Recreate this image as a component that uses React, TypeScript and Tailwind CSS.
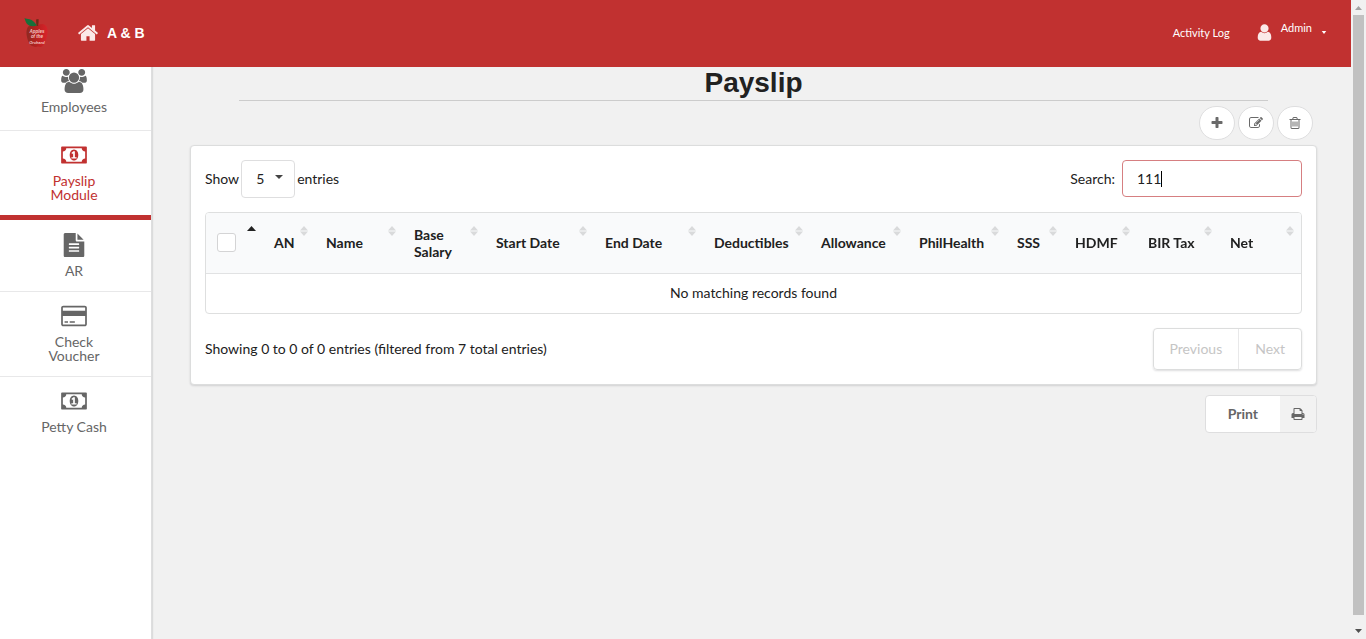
import { useEffect, useRef, useState } from "react";

const paths = {
  home: "M1472 992v480q0 26-19 45t-45 19h-384v-384h-256v384h-384q-26 0-45-19t-19-45v-480q0-1 .5-3t.5-3l575-474 575 474q1 2 1 6zm223-69l-62 74q-8 9-21 11h-3q-13 0-21-7l-692-577-692 577q-12 8-24 7-13-2-21-11l-62-74q-8-10-7-23.5t11-21.5l719-599q32-26 76-26t76 26l244 204v-195q0-14 9-23t23-9h192q14 0 23 9t9 23v408l219 182q10 8 11 21.5t-7 23.5z",
  user: "M1536 1399q0 109-62.5 187t-150.5 78h-854q-88 0-150.5-78t-62.5-187q0-85 8.5-160.5t31.5-152 58.5-131 94-89 134.5-34.5q131 128 313 128t313-128q76 0 134.5 34.5t94 89 58.5 131 31.5 152 8.5 160.5zm-256-887q0 159-112.5 271.5t-271.5 112.5-271.5-112.5-112.5-271.5 112.5-271.5 271.5-112.5 271.5 112.5 112.5 271.5z",
  users: "M593 896q-162 5-265 128h-134q-82 0-138-40.5t-56-118.5q0-353 124-353 6 0 43.5 21t97.5 42.5 119 21.5q67 0 133-23-5 37-5 66 0 139 81 256zm1071 637q0 120-73 189.5t-194 69.5h-874q-121 0-194-69.5t-73-189.5q0-53 3.5-103.5t14-109 26.5-108.5 43-97.5 62-81 85.5-53.5 111.5-20q10 0 43 21.5t73 48 107 48 135 21.5 135-21.5 107-48 73-48 43-21.5q61 0 111.5 20t85.5 53.5 62 81 43 97.5 26.5 108.5 14 109 3.5 103.5zm-1024-1277q0 106-75 181t-181 75-181-75-75-181 75-181 181-75 181 75 75 181zm704 384q0 159-112.5 271.5t-271.5 112.5-271.5-112.5-112.5-271.5 112.5-271.5 271.5-112.5 271.5 112.5 112.5 271.5zm576 225q0 78-56 118.5t-138 40.5h-134q-103-123-265-128 81-117 81-256 0-29-5-66 66 23 133 23 59 0 119-21.5t97.5-42.5 43.5-21q124 0 124 353zm-128-609q0 106-75 181t-181 75-181-75-75-181 75-181 181-75 181 75 75 181z",
  money: "M768 1152h384v-96h-128v-448h-114l-148 137 77 80q42-37 55-57h2v288h-128v96zm512-256q0 70-21 142t-59.5 134-101.5 101-138 39-138-39-101.5-101-59.5-134-21-142 21-142 59.5-134 101.5-101 138-39 138 39 101.5 101 59.5 134 21 142zm512 256v-512q-106 0-181-75t-75-181h-1152q0 106-75 181t-181 75v512q106 0 181 75t75 181h1152q0-106 75-181t181-75zm128-832v1152q0 26-19 45t-45 19h-1792q-26 0-45-19t-19-45v-1152q0-26 19-45t45-19h1792q26 0 45 19t19 45z",
  file: "M1596 476q14 14 28 36h-472v-472q22 14 36 28zm-476 164h544v1056q0 40-28 68t-68 28h-1344q-40 0-68-28t-28-68v-1600q0-40 28-68t68-28h800v544q0 40 28 68t68 28zm160 736v-64q0-14-9-23t-23-9h-704q-14 0-23 9t-9 23v64q0 14 9 23t23 9h704q14 0 23-9t9-23zm0-256v-64q0-14-9-23t-23-9h-704q-14 0-23 9t-9 23v64q0 14 9 23t23 9h704q14 0 23-9t9-23zm0-256v-64q0-14-9-23t-23-9h-704q-14 0-23 9t-9 23v64q0 14 9 23t23 9h704q14 0 23-9t9-23z",
  card: "M1760 128q66 0 113 47t47 113v1216q0 66-47 113t-113 47h-1600q-66 0-113-47t-47-113v-1216q0-66 47-113t113-47h1600zm-1600 128q-13 0-22.5 9.5t-9.5 22.5v224h1664v-224q0-13-9.5-22.5t-22.5-9.5h-1600zm1600 1280q13 0 22.5-9.5t9.5-22.5v-608h-1664v608q0 13 9.5 22.5t22.5 9.5h1600zm-1504-128v-128h256v128h-256zm384 0v-128h384v128h-384z",
  plus: "M1600 736v192q0 40-28 68t-68 28h-416v416q0 40-28 68t-68 28h-192q-40 0-68-28t-28-68v-416h-416q-40 0-68-28t-28-68v-192q0-40 28-68t68-28h416v-416q0-40 28-68t68-28h192q40 0 68 28t28 68v416h416q40 0 68 28t28 68z",
  edit: "M888 1184l116-116-152-152-116 116v56h96v96h56zm440-720q-16-16-33 1l-350 350q-17 17-1 33t33-1l350-350q17-17 1-33zm80 594v190q0 119-84.5 203.5t-203.5 84.5h-832q-119 0-203.5-84.5t-84.5-203.5v-832q0-119 84.5-203.5t203.5-84.5h832q63 0 117 25 15 7 18 23 3 17-9 29l-49 49q-14 14-32 8-23-6-45-6h-832q-66 0-113 47t-47 113v832q0 66 47 113t113 47h832q66 0 113-47t47-113v-126q0-13 9-22l64-64q15-15 35-7t20 29zm-96-738l288 288-672 672h-288v-288zm444 132l-92 92-288-288 92-92q28-28 68-28t68 28l152 152q28 28 28 68t-28 68z",
  trash: "M704 736v576q0 14-9 23t-23 9h-64q-14 0-23-9t-9-23v-576q0-14 9-23t23-9h64q14 0 23 9t9 23zm256 0v576q0 14-9 23t-23 9h-64q-14 0-23-9t-9-23v-576q0-14 9-23t23-9h64q14 0 23 9t9 23zm256 0v576q0 14-9 23t-23 9h-64q-14 0-23-9t-9-23v-576q0-14 9-23t23-9h64q14 0 23 9t9 23zm128 724v-948h-896v948q0 22 7 40.5t14.5 27 10.5 8.5h832q3 0 10.5-8.5t14.5-27 7-40.5zm-672-1076h448l-48-117q-7-9-17-11h-317q-10 2-17 11zm928 32v64q0 14-9 23t-23 9h-96v948q0 83-47 143.5t-113 60.5h-832q-66 0-113-58.5t-47-141.5v-952h-96q-14 0-23-9t-9-23v-64q0-14 9-23t23-9h309l70-167q15-37 54-63t79-26h320q40 0 79 26t54 63l70 167h309q14 0 23 9t9 23z",
  print: "M448 1536h896v-256h-896v256zm0-640h896v-384h-160q-40 0-68-28t-28-68v-160h-640v640zm1152 64q0-26-19-45t-45-19-45 19-19 45 19 45 45 19 45-19 19-45zm128 0v416q0 13-9.5 22.5t-22.5 9.5h-224v160q0 40-28 68t-68 28h-960q-40 0-68-28t-28-68v-160h-224q-13 0-22.5-9.5t-9.5-22.5v-416q0-79 56.5-135.5t135.5-56.5h64v-544q0-40 28-68t68-28h672q40 0 88 20t76 48l152 152q28 28 48 76t20 88v256h64q79 0 135.5 56.5t56.5 135.5z",
};

type IconName = keyof typeof paths;

function Icon({ name, className, width = 1792 }: { name: IconName; className: string; width?: number }) {
  return (
    <svg viewBox={`0 0 ${width} 1792`} className={className} fill="currentColor" aria-hidden="true">
      <path d={paths[name]} />
    </svg>
  );
}

function AppleLogo() {
  return (
    <svg viewBox="0 0 24 32" className="h-8 w-6" role="img" aria-label="Apples">
      <defs>
        <linearGradient id="skin" x1="0" x2="1" y1="0" y2="0">
          <stop offset="0" stopColor="#8d2a22" />
          <stop offset="0.45" stopColor="#b5201f" />
          <stop offset="1" stopColor="#d8232a" />
        </linearGradient>
      </defs>
      <path d="M13 9c2-2 6-3 8-1 3 2 3 7 2 11-1 5-3 10-6 11-1 .4-2-.4-3-.4s-2 .7-3.500.2C6 29 4 25 3 20c-1-5-.5-9 2-11 2.500-2 6-1 8 0z" fill="url(#skin)" />
      <path d="M12.500 9c-.5-3-.2-5-.5-6.500l2.500-.6c.3 2 0 4.500-.4 7.100z" fill="#6d2a17" />
      <path d="M.5 1c1.500 1 3 .8 5 1.200 3 .6 5.500 3 7.200 6.300-3.200 1.200-7 .8-9-1C1.800 5.900 1.200 3.500.5 1z" fill="#17703a" />
      <g fill="#f3c5c0" fontFamily="Liberation Sans, sans-serif" fontSize="4.500" fontWeight="700" fontStyle="italic" textAnchor="middle">
        <text x="13" y="15.500">Apples</text>
        <text x="13" y="21">of the</text>
        <text x="13" y="26.500" fontSize="4">Orchard</text>
      </g>
    </svg>
  );
}

const columns = [
  { label: "AN", width: "w-[52px]" },
  { label: "Name", width: "w-[88px]" },
  { label: "Base Salary", width: "w-[82px]" },
  { label: "Start Date", width: "w-[109px]" },
  { label: "End Date", width: "w-[109px]" },
  { label: "Deductibles", width: "w-[107px]" },
  { label: "Allowance", width: "w-[98px]" },
  { label: "PhilHealth", width: "w-[98px]" },
  { label: "SSS", width: "w-[58px]" },
  { label: "HDMF", width: "w-[73px]" },
  { label: "BIR Tax", width: "w-[82px]" },
  { label: "Net", width: "w-[82px]" },
];

const navBase = "flex flex-col items-center border-b pr-[33px] pl-[30px] text-center text-sm leading-[14px]";

function NavItem({ icon, label, width, className }: { icon: IconName; label: string; width?: number; className: string }) {
  return (
    <a href="#" className={`${navBase} ${className}`}>
      <Icon name={icon} width={width} className="mb-[7px] h-6 w-[26px]" />
      {label}
    </a>
  );
}

function SortMark() {
  return (
    <svg viewBox="0 0 8 10" className="absolute top-[13px] right-[7px] h-2.5 w-2" fill="#d9dadb" aria-hidden="true">
      <path d="M4 0l4 4.500H0zM4 10L0 5.500h8z" />
    </svg>
  );
}

const roundButton =
  "flex h-[34px] w-9 items-center justify-center rounded-full border border-[#dededf] bg-white text-[#6a6a6a]";

export default function App() {
  const [query, setQuery] = useState("111");
  const [caret, setCaret] = useState(3);
  const search = useRef<HTMLInputElement>(null);

  useEffect(() => {
    search.current?.focus();
    search.current?.setSelectionRange(3, 3);
  }, []);

  return (
    <div className="flex min-h-screen bg-[#f1f1f1] font-['Lato',sans-serif] text-sm text-[#212121]">
      <div className="flex min-w-0 flex-1 flex-col">
        <header className="flex h-[67px] items-center bg-[#c13130] px-6 pb-0.5 text-white">
          <a href="#" aria-label="Logo">
            <AppleLogo />
          </a>
          <a href="#" className="ml-[29px] flex items-center gap-2 font-['Liberation_Sans',sans-serif] font-bold">
            <Icon name="home" className="h-[22px] w-[22px] text-[#fbe9e8]" />
            A &amp; B
          </a>
          <nav className="ml-auto flex items-center text-[11px]">
            <a href="#">Activity Log</a>
            <button type="button" className="ml-[25px] flex items-center">
              <Icon name="user" className="h-[19px] w-[19px] text-[#fbe9e8]" />
              <span className="ml-[7px] pb-2.5">Admin</span>
              <svg viewBox="0 0 6 4" className="ml-[9px] h-[3px] w-1.5" fill="currentColor" aria-hidden="true">
                <path d="M0 0h6L3 4z" />
              </svg>
            </button>
          </nav>
        </header>

        <div className="flex flex-1">
          <aside className="w-[152px] shrink-0 border-r border-[#dededf] bg-white text-[#666666] shadow-[1px_0_1px_rgba(34,36,38,0.1)]">
            <NavItem icon="users" label="Employees" width={1920} className="border-[#e8e8e9] pt-0.5 pb-4" />
            <a href="#" className={`${navBase} border-b-[5px] border-[#c13130] pt-3 pb-[13px] text-[#c13130]`}>
              <Icon name="money" width={1920} className="mb-[7px] h-6 w-[26px]" />
              Payslip Module
            </a>
            <NavItem icon="file" label="AR" className="border-[#e8e8e9] pt-[13px] pb-[13px]" />
            <NavItem icon="card" label="Check Voucher" width={1920} className="border-[#e8e8e9] pt-3 pb-[13px]" />
            <NavItem icon="money" label="Petty Cash" width={1920} className="border-transparent pt-3 pb-[13px]" />
          </aside>

          <main className="min-w-0 flex-1 pr-[34px] pl-[38px]">
            <h1 className="mx-[49px] border-b border-[#cccccc] pb-px text-center font-['Liberation_Sans',sans-serif] text-[28px] leading-8 font-bold">
              Payslip
            </h1>
            <div className="mt-[5px] mr-1 flex justify-end gap-[3px]">
              <button type="button" aria-label="Add" className={roundButton}>
                <Icon name="plus" className="h-3.5 w-3.5" />
              </button>
              <button type="button" aria-label="Edit" className={roundButton}>
                <Icon name="edit" className="h-3.5 w-3.5" />
              </button>
              <button type="button" aria-label="Delete" className={roundButton}>
                <Icon name="trash" className="h-3.5 w-3.5" />
              </button>
            </div>

            <section className="mt-[5px] rounded border border-[#dcdddd] bg-white p-3.5 shadow-[0_1px_2px_rgba(34,36,38,0.15)]">
              <div className="flex items-start justify-between">
                <label className="flex items-center gap-0.5">
                  Show
                  <span className="relative">
                    <select
                      defaultValue="5"
                      className="h-[38px] w-[54px] appearance-none rounded border border-[#dededf] bg-white pl-3.5 text-sm"
                    >
                      <option>5</option>
                      <option>10</option>
                      <option>25</option>
                    </select>
                    <svg viewBox="0 0 8 4" className="pointer-events-none absolute top-[15px] right-3 h-1 w-2" fill="#444" aria-hidden="true">
                      <path d="M0 0h8L4 4z" />
                    </svg>
                  </span>
                  entries
                </label>
                <label className="flex items-center gap-[7px]">
                  Search:
                  <span className="relative">
                    <input
                      ref={search}
                      type="text"
                      value={query}
                      onChange={(e) => setQuery(e.target.value)}
                      onSelect={(e) => setCaret(e.currentTarget.selectionEnd ?? 0)}
                      className="block h-[37px] w-[180px] rounded border border-[#d67f81] px-3.5 text-sm caret-transparent outline-none"
                    />
                    <span
                      className="pointer-events-none absolute top-[11px] h-4 w-px bg-black"
                      style={{ left: `calc(15px + ${caret}ch)` }}
                    />
                  </span>
                </label>
              </div>

              <div className="mt-3.5 overflow-hidden rounded border border-[#dedfdf]">
                <table className="w-full table-fixed border-collapse">
                  <thead className="bg-[#f9fafb]">
                    <tr className="h-[60px] border-b border-[#e1e2e3]">
                      <th className="relative w-[57px] pl-[11px] text-left">
                        <input
                          type="checkbox"
                          aria-label="Select all"
                          className="block h-[19px] w-[19px] appearance-none rounded-[3px] border border-[#d4d4d5] bg-white"
                        />
                        <svg viewBox="0 0 9 5" className="absolute top-[13px] right-[7px] h-[5px] w-[9px]" fill="#222" aria-hidden="true">
                          <path d="M4.500 0L9 5H0z" />
                        </svg>
                      </th>
                      {columns.map((c) => (
                        <th key={c.label} className={`relative pl-[11px] text-left leading-[17px] font-bold ${c.width}`}>
                          {c.label}
                          <SortMark />
                        </th>
                      ))}
                    </tr>
                  </thead>
                  <tbody>
                    <tr>
                      <td colSpan={13} className="h-10 text-center">
                        No matching records found
                      </td>
                    </tr>
                  </tbody>
                </table>
              </div>

              <div className="mt-3.5 flex items-center justify-between">
                <p>Showing 0 to 0 of 0 entries (filtered from 7 total entries)</p>
                <div className="flex h-[42px] rounded border border-[#dcdddd] text-[#c5c5c5] shadow-[0_1px_2px_rgba(34,36,38,0.15)]">
                  <button type="button" disabled className="border-r border-[#e8e8e9] px-4">
                    Previous
                  </button>
                  <button type="button" disabled className="px-4">
                    Next
                  </button>
                </div>
              </div>
            </section>

            <div className="mt-2.5 flex justify-end">
              <button
                type="button"
                className="flex h-[38px] items-stretch overflow-hidden rounded border border-[#dededf] bg-white font-bold text-[#666666]"
              >
                <span className="flex items-center px-[22px]">Print</span>
                <span className="flex w-9 items-center justify-center bg-[#f2f2f2]">
                  <Icon name="print" className="h-3.5 w-3.5" />
                </span>
              </button>
            </div>
          </main>
        </div>
      </div>

      <div className="flex w-[15px] shrink-0 flex-col items-center justify-between bg-[#f1f1f1]" aria-hidden="true">
        <svg viewBox="0 0 15 15" className="h-[15px] w-[15px]" fill="#a3a3a3">
          <path d="M4 10h7L7.500 6z" />
        </svg>
        <div className="w-[11px] flex-1 bg-[#c1c1c1]" />
        <svg viewBox="0 0 15 24" className="h-6 w-[15px]" fill="#505050">
          <path d="M4 14h7l-3.500 4z" />
        </svg>
      </div>
    </div>
  );
}
